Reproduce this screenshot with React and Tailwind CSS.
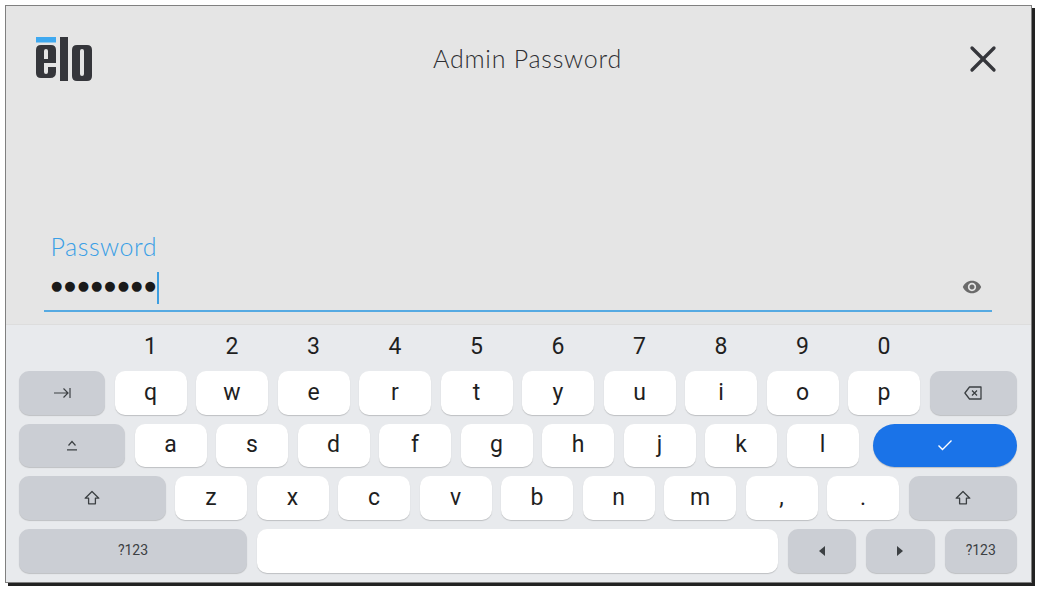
import { X } from 'lucide-react';

const Key = ({ children, w = 'w-[72px]', kind = 'white' }) => {
  const tone =
    kind === 'white'
      ? 'bg-white text-[#1f1f1f] text-[23px]'
      : kind === 'blue'
      ? 'bg-[#1a73e8] text-white rounded-[22px]'
      : 'bg-[#cbced4] text-[#3c4043] text-[14px]';
  return (
    <div
      className={`${w} ${tone} h-[43.5px] shrink-0 flex items-center justify-center rounded-[10px] shadow-[0_1px_1px_rgba(0,0,0,0.18)]`}
    >
      {children}
    </div>
  );
};

const ShiftIcon = () => (
  <svg width="16" height="16" viewBox="0 0 16 16" fill="none" stroke="#3c4043" strokeWidth="1.3" strokeLinejoin="round">
    <path d="M8 1.5 1.2 8.2h3.4v5.6h6.8V8.2h3.4z" />
  </svg>
);

const Logo = () => (
  <svg width="56" height="45" viewBox="0 0 56 45" className="shrink-0">
    <rect x="0" y="0" width="20" height="5.5" fill="#3fa9f0" />
    <path
      fillRule="evenodd"
      fill="#35363b"
      d="M5 8h10q5 0 5 5v13h-12v9q0 2 2 2t2-2v-5h8v5q0 6-6 6h-9q-5 0-5-5v-23q0-5 5-5zm3 14h4v-8q0-2-2-2t-2 2z"
    />
    <rect x="24" y="0" width="8" height="44" fill="#35363b" />
    <path
      fillRule="evenodd"
      fill="#35363b"
      d="M41 8h10q5 0 5 5v26q0 5-5 5h-10q-5 0-5-5v-26q0-5 5-5zm5 4q-2 0-2 2v23q0 2 2 2t2-2v-23q0-2-2-2z"
    />
  </svg>
);

const rowOne = ['q', 'w', 'e', 'r', 't', 'y', 'u', 'i', 'o', 'p'];
const rowTwo = ['a', 's', 'd', 'f', 'g', 'h', 'j', 'k', 'l'];
const rowThree = ['z', 'x', 'c', 'v', 'b', 'n', 'm', ',', '.'];
const digits = ['1', '2', '3', '4', '5', '6', '7', '8', '9', '0'];

export default function App() {
  return (
    <div className="w-[1037px] h-[589px] bg-white pt-[5px] pl-[5px] overflow-hidden font-['Roboto',sans-serif]">
      <div className="w-[1027px] h-[578px] border border-[#808080] shadow-[3px_3px_0_#222] flex flex-col">
        {/* Top panel */}
        <div className="h-[319px] shrink-0 bg-[#e5e5e5] border-b border-[#dddddd] flex flex-col">
          <div className="flex items-start pl-[30px] pr-[35px] pt-[31px] h-[225px] shrink-0">
            <Logo />
            <div className="flex-1 pr-[8px] pt-[6px] text-center text-[25px] leading-[30px] font-light tracking-[0.75px] text-[#2e2f33] font-['Lato',sans-serif]">
              Admin Password
            </div>
            <X size={44} strokeWidth={1.8} className="text-[#35363b] -ml-[10px] -mr-[9px] shrink-0" />
          </div>
          <div className="pl-[44.500px] text-[25px] leading-[30px] font-light tracking-[0.55px] text-[#3a9fe6] font-['Lato',sans-serif]">
            Password
          </div>
          <div className="ml-[38px] mr-[39px] h-[45px] mt-[6px] border-b-2 border-[#56aae2] flex items-center pl-[7px] pr-[10px] pb-[1px]">
            <span className="text-[13px] leading-[32px] tracking-[2px] text-[#1a1a1a] font-['DejaVu_Sans',sans-serif] -translate-y-[2px]">●●●●●●●●</span>
            <span className="w-[2px] h-[32px] bg-[#3d9ee0] -ml-[1px]" />
            <svg width="20" height="20" viewBox="0 0 24 24" fill="#6a6a6a" className="ml-auto mb-[2px]">
              <path d="M12 4.500C7 4.500 2.730 7.610 1 12c1.730 4.390 6 7.500 11 7.500s9.270-3.110 11-7.500c-1.730-4.390-6-7.500-11-7.500zM12 17c-2.760 0-5-2.240-5-5s2.240-5 5-5 5 2.240 5 5-2.240 5-5 5zm0-8c-1.660 0-3 1.340-3 3s1.340 3 3 3 3-1.340 3-3-1.340-3-3-3z" />
            </svg>
          </div>
        </div>

        {/* Keyboard */}
        <div className="flex-1 bg-[#e8eaed] pl-[13px] flex flex-col">
          <div className="flex gap-[9.500px] pl-[95.500px] h-[46px] pb-[2px] items-center shrink-0 text-[23px] text-[#1f1f1f]">
            {digits.map((d) => (
              <div key={d} className="w-[72px] text-center">{d}</div>
            ))}
          </div>
          <div className="flex flex-col gap-[9.200px]">
            <div className="flex gap-[9.500px]">
              <Key w="w-[86px]" kind="gray">
                <svg width="18" height="12" viewBox="0 0 18 12" fill="none" stroke="#3c4043" strokeWidth="1.200">
                  <path d="M1 6h14M10.500 1.500 15 6l-4.500 4.500M17 1v10" />
                </svg>
              </Key>
              {rowOne.map((k) => (
                <Key key={k}>{k}</Key>
              ))}
              <Key w="w-[87px]" kind="gray">
                <svg width="18" height="14" viewBox="0 0 18 14" fill="none" stroke="#3c4043" strokeWidth="1.300" strokeLinejoin="round">
                  <path d="M5.500 1H17v12H5.500L.9 7zM8 4.500l5 5M13 4.500l-5 5" />
                </svg>
              </Key>
            </div>
            <div className="flex gap-[9.500px]">
              <Key w="w-[106px]" kind="gray">
                <svg width="12" height="11" viewBox="0 0 12 11" fill="none" stroke="#3c4043" strokeWidth="1.200">
                  <path d="M2.500 5.500 6 1.500l3.500 4M1 9.800h10" />
                </svg>
              </Key>
              {rowTwo.map((k) => (
                <Key key={k}>{k}</Key>
              ))}
              <Key w="w-[143.500px] ml-[5px]" kind="blue">
                <svg width="16" height="12" viewBox="0 0 16 12" fill="none" stroke="#fff" strokeWidth="1.400">
                  <path d="M1.500 6.500 5.500 10.500 14.500 1.500" />
                </svg>
              </Key>
            </div>
            <div className="flex gap-[9.500px]">
              <Key w="w-[146.500px]" kind="gray">
                <ShiftIcon />
              </Key>
              {rowThree.map((k) => (
                <Key key={k}>{k}</Key>
              ))}
              <Key w="w-[108.500px]" kind="gray">
                <ShiftIcon />
              </Key>
            </div>
            <div className="flex gap-[10px]">
              <Key w="w-[228px]" kind="gray">?123</Key>
              <Key w="w-[521px]"> </Key>
              <Key w="w-[68px]" kind="gray">
                <svg width="6" height="10" viewBox="0 0 6 10" fill="#3c4043"><path d="M6 0v10L0 5z" /></svg>
              </Key>
              <Key w="w-[68.500px]" kind="gray">
                <svg width="6" height="10" viewBox="0 0 6 10" fill="#3c4043"><path d="M0 0v10l6-5z" /></svg>
              </Key>
              <Key w="w-[72.500px]" kind="gray">?123</Key>
            </div>
          </div>
        </div>
      </div>
    </div>
  );
}
